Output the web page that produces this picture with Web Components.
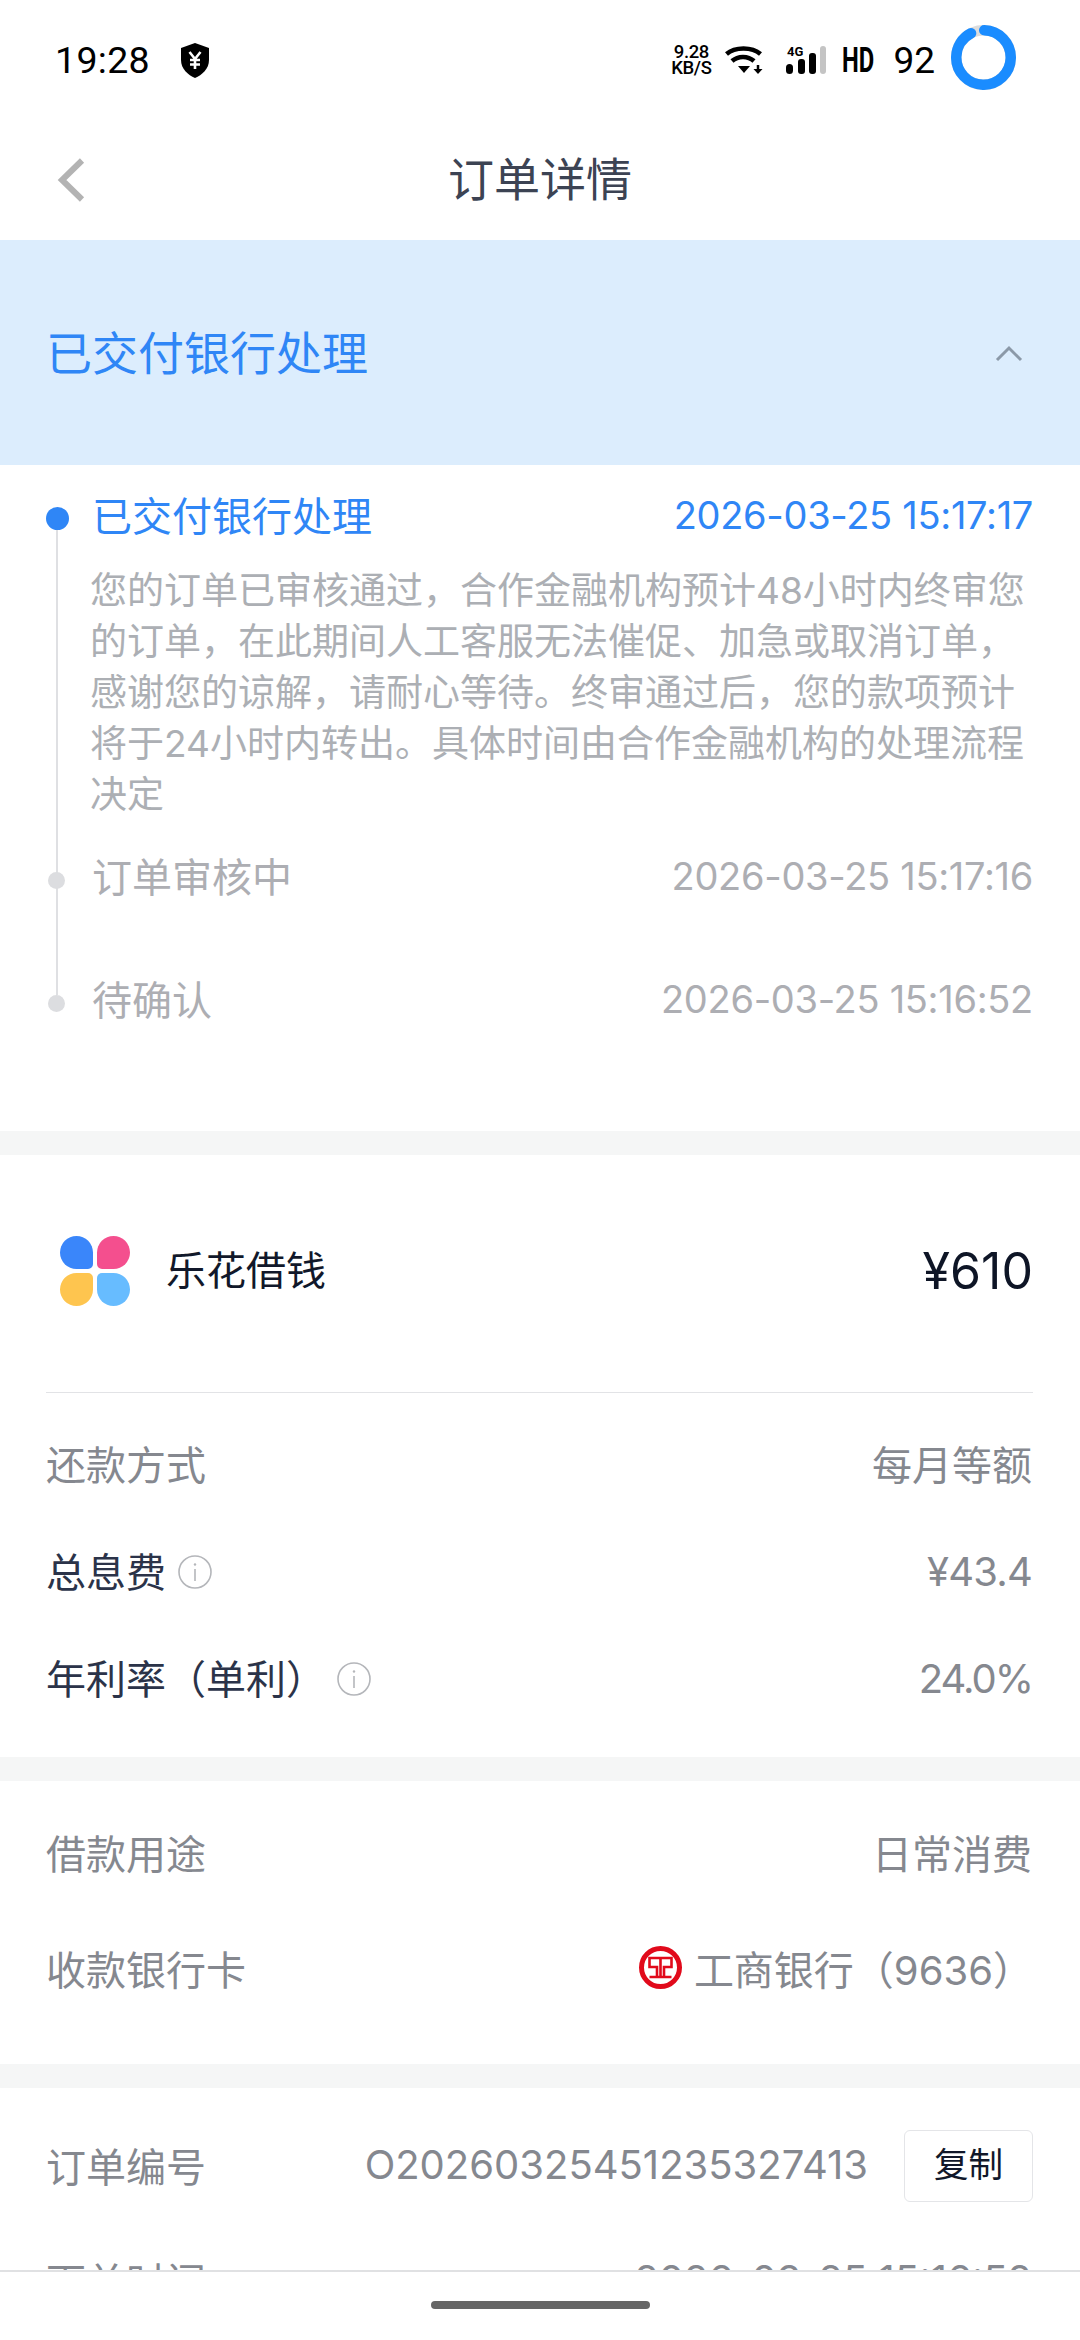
<!DOCTYPE html>
<html lang="zh">
<head>
<meta charset="UTF-8">
<title>订单详情</title>
<style>
  html, body { margin: 0; background: #fff; }
  body { position: relative; width: 1080px; height: 2340px; overflow: hidden; font-family: "Inter", "Noto Sans CJK SC", sans-serif; }
</style>
<script>
  customElements.define('status-bar', class extends HTMLElement {
    constructor() {
      super();
      this.attachShadow({ mode: 'open' }).innerHTML = `
        <style>
          :host { display: flex; align-items: center; height: 120px; padding: 0 64px 0 55px; box-sizing: border-box; color: #000; font-family: "Roboto", sans-serif; }
          .time { font-size: 37.5px; letter-spacing: .3px; }
          .shield { margin-left: 31px; }
          .right { margin-left: auto; display: flex; align-items: center; }
          .speed { width: 42px; font-size: 18.5px; font-weight: 500; line-height: 16px; text-align: center; letter-spacing: -.4px; }
          .hd { display: block; width: 33px; margin-left: 16px; font-size: 35px; font-weight: 700; transform: scaleX(.68); transform-origin: left; white-space: nowrap; }
          .batt { font-size: 37px; margin-left: 18px; }
          .ring { margin: 0 0 5px 16px; }
        </style>
        <span class="time">19:28</span>
        <svg class="shield" width="28" height="35" viewBox="0 0 28 35">
          <path d="M14 0 L28 5 V17 C28 26 21 32 14 35 C7 32 0 26 0 17 V5 Z" fill="#000"/>
          <path d="M8.5 9 L14 16 L19.5 9 M14 16 V26 M9 17 H19 M9 21.5 H19" stroke="#fff" stroke-width="2.6" fill="none"/>
        </svg>
        <div class="right">
          <div class="speed">9.28<br>KB/S</div>
          <svg width="38" height="28" viewBox="0 0 38 28" style="margin-left:13px">
            <path d="M1.5 8 C10 0.5 27 0.5 35.5 8" stroke="#000" stroke-width="4.5" fill="none"/>
            <path d="M7 15 C13 9.5 23 9.5 29 15" stroke="#000" stroke-width="4.5" fill="none"/>
            <path d="M13 20 H25 L19 27 Z" fill="#000"/>
            <path d="M33 19 V23" stroke="#000" stroke-width="2.5"/>
            <path d="M28.5 23 H37.5 L33 28 Z" fill="#000"/>
          </svg>
          <svg width="40" height="36" viewBox="0 -8 40 36" style="margin:-8px 0 0 23px">
            <text x="1" y="10" font-family="Roboto" font-size="13" font-weight="700" fill="#000">4G</text>
            <rect x="0" y="18" width="7" height="10" rx="3.5" fill="#000"/>
            <rect x="12" y="13" width="7" height="15" rx="3" fill="#000"/>
            <rect x="23" y="7" width="7" height="21" rx="3" fill="#000"/>
            <rect x="34" y="0" width="6" height="28" rx="3" fill="#c4c4c4"/>
          </svg>
          <span class="hd">HD</span>
          <span class="batt">92</span>
          <svg class="ring" width="65" height="65" viewBox="0 0 65 65">
            <circle cx="32.5" cy="32.5" r="27.25" fill="none" stroke="#dcdcdc" stroke-width="10.5"/>
            <circle cx="32.5" cy="32.5" r="27.25" fill="none" stroke="#1a8cff" stroke-width="10.5" stroke-linecap="round" pathLength="100" stroke-dasharray="92 8" transform="rotate(-88.5 32.5 32.5)"/>
          </svg>
        </div>`;
    }
  });

  customElements.define('nav-header', class extends HTMLElement {
    constructor() {
      super();
      this.attachShadow({ mode: 'open' }).innerHTML = `
        <style>
          :host { display: flex; align-items: center; justify-content: center; position: relative; height: 120px; padding-bottom: 8px; box-sizing: border-box; font-size: 46px; color: #3c4353; }
          svg { position: absolute; left: 54px; top: 38px; }
        </style>
        <svg width="34" height="44" viewBox="0 0 34 44"><path d="M28 2.5 L8 22 L28 41.5" fill="none" stroke="#b3b3b3" stroke-width="6"/></svg>
        <slot></slot>`;
    }
  });

  customElements.define('status-banner', class extends HTMLElement {
    constructor() {
      super();
      this.attachShadow({ mode: 'open' }).innerHTML = `
        <style>
          :host { display: flex; align-items: center; justify-content: space-between; height: 225px; padding: 0 56px 0 46px; background: #dcedfd; color: #2f86f6; font-size: 46px; box-sizing: border-box; }
          span { margin-bottom: 6px; }
        </style>
        <span><slot></slot></span>
        <svg width="30" height="18" viewBox="0 0 30 18"><path d="M3 16 L15 4 L27 16" fill="none" stroke="#8b99a8" stroke-width="3"/></svg>`;
    }
  });

  customElements.define('time-line', class extends HTMLElement {
    constructor() {
      super();
      this.attachShadow({ mode: 'open' }).innerHTML = `
        <style>
          :host { display: block; position: relative; padding: 14px 47px 98px 46px; }
          .rail { position: absolute; left: 56px; top: 65px; width: 1.5px; height: 465px; background: #dfe0e3; }
        </style>
        <div class="rail"></div>
        <slot></slot>`;
    }
  });

  customElements.define('time-node', class extends HTMLElement {
    constructor() {
      super();
      this.attachShadow({ mode: 'open' }).innerHTML = `
        <style>
          :host { display: block; position: relative; color: #adaeb3; }
          :host([active]) { color: #2f86f6; }
          .row { display: flex; align-items: center; justify-content: space-between; height: 70px; font-size: 40px; }
          .dot { width: 17px; height: 17px; border-radius: 50%; background: #dcdde0; margin: 10px 27px 0 2px; flex: none; }
          :host([active]) .dot { width: 23px; height: 23px; background: #2f86f6; margin: 9px 23px 0 0; }
          .title { display: flex; align-items: center; }
          time { font-size: 38px; letter-spacing: -.3px; padding-top: 2px; }
          ::slotted([slot=desc]) { display: block; margin: 0 -8px 0 44px; font-size: 37px; line-height: 51px; color: #acafb4; padding-top: 16px; }
        </style>
        <div class="row">
          <div class="title"><span class="dot"></span><slot></slot></div>
          <time><slot name="time"></slot></time>
        </div>
        <slot name="desc"></slot>`;
    }
  });

  customElements.define('section-gap', class extends HTMLElement {
    constructor() {
      super();
      this.attachShadow({ mode: 'open' }).innerHTML = `<style>:host { display: block; height: 24px; background: #f5f6f6; }</style>`;
    }
  });

  customElements.define('product-row', class extends HTMLElement {
    constructor() {
      super();
      this.attachShadow({ mode: 'open' }).innerHTML = `
        <style>
          :host { display: flex; align-items: center; height: 238px; margin: 0 47px 0 46px; padding-bottom: 5px; border-bottom: 1.5px solid #e2e3e6; box-sizing: border-box; font-size: 40px; color: #11182a; }
          svg { margin: 0 36px 0 14px; }
          .name { margin-bottom: 7px; }
          .amount { margin-left: auto; font-size: 50px; color: #0e1526; }
        </style>
        <svg width="70" height="70" viewBox="0 0 70 70">
          <path d="M0 16.5 A16.5 16.5 0 0 1 33 16.5 V28 A5 5 0 0 1 28 33 H16.5 A16.5 16.5 0 0 1 0 16.5 Z" fill="#3a86fa"/>
          <path d="M37 16.5 A16.5 16.5 0 1 1 53.5 33 H42 A5 5 0 0 1 37 28 Z" fill="#f44f8e"/>
          <path d="M0 53.5 A16.5 16.5 0 0 1 16.5 37 H28 A5 5 0 0 1 33 42 V53.5 A16.5 16.5 0 0 1 0 53.5 Z" fill="#fec54f"/>
          <path d="M37 42 A5 5 0 0 1 42 37 H53.5 A16.5 16.5 0 1 1 37 53.5 Z" fill="#67bcff"/>
        </svg>
        <span class="name"><slot></slot></span>
        <span class="amount"><slot name="amount"></slot></span>`;
    }
  });

  customElements.define('info-group', class extends HTMLElement {
    constructor() {
      super();
      this.attachShadow({ mode: 'open' }).innerHTML = `
        <style>:host { display: block; }</style>
        <slot></slot>`;
    }
  });

  customElements.define('info-row', class extends HTMLElement {
    constructor() {
      super();
      this.attachShadow({ mode: 'open' }).innerHTML = `
        <style>
          :host { display: flex; align-items: center; justify-content: space-between; padding: 0 48px 0 46px; box-sizing: border-box; font-size: 40px; color: #85888f; height: var(--h, 107px); }
          :host([dark]) .label { color: #2b3349; }
          .label { display: flex; align-items: center; }
          .value { display: flex; align-items: center; }
        </style>
        <span class="label"><slot></slot></span>
        <span class="value"><slot name="value"></slot></span>`;
    }
  });

  customElements.define('info-icon', class extends HTMLElement {
    constructor() {
      super();
      this.attachShadow({ mode: 'open' }).innerHTML = `
        <style>:host { display: inline-flex; margin: 5px 0 0 var(--ml, 12px); }</style>
        <svg width="34" height="34" viewBox="0 0 34 34">
          <circle cx="17" cy="17" r="16" fill="none" stroke="#b4b6ba" stroke-width="1.6"/>
          <path d="M17 14 V26" stroke="#b4b6ba" stroke-width="1.6"/>
          <circle cx="17" cy="9.5" r="1.2" fill="#b4b6ba"/>
        </svg>`;
    }
  });

  customElements.define('icbc-logo', class extends HTMLElement {
    constructor() {
      super();
      this.attachShadow({ mode: 'open' }).innerHTML = `
        <style>:host { display: inline-flex; margin-right: 12px; transform: translateY(-1px); }</style>
        <svg width="43" height="43" viewBox="0 0 43 43">
          <circle cx="21.5" cy="21.5" r="19" fill="none" stroke="#e10a1b" stroke-width="5"/>
          <path d="M18 12 H10.5 V21 H18 V31 H10.5 M25 12 H32.5 V21 H25 V31 H32.5 M18 12 H25 M18 31 H25 M21.5 12 V31" fill="none" stroke="#e10a1b" stroke-width="2.6"/>
        </svg>`;
    }
  });

  customElements.define('copy-button', class extends HTMLElement {
    constructor() {
      super();
      this.attachShadow({ mode: 'open' }).innerHTML = `
        <style>:host { display: flex; align-items: center; justify-content: center; width: 129px; height: 72px; margin: 2px 0 0 36px; border: 1.5px solid #e4e5e8; border-radius: 6px; box-sizing: border-box; color: #11182a; font-size: 34.56px; padding-bottom: 7px; }</style>
        <slot></slot>`;
    }
  });

  customElements.define('bottom-bar', class extends HTMLElement {
    constructor() {
      super();
      this.attachShadow({ mode: 'open' }).innerHTML = `
        <style>
          :host { display: flex; justify-content: center; position: absolute; left: 0; top: 2270px; width: 1080px; height: 70px; background: #fff; border-top: 2px solid #e0e1e3; box-sizing: border-box; }
          i { display: block; width: 219px; height: 8px; margin-top: 29px; border-radius: 4px; background: #666; }
        </style>
        <i></i>`;
    }
  });
</script>
</head>
<body>
  <status-bar></status-bar>
  <nav-header>订单详情</nav-header>
  <status-banner>已交付银行处理</status-banner>
  <time-line>
    <time-node active>已交付银行处理<span slot="time">2026-03-25 15:17:17</span><span slot="desc">您的订单已审核通过，合作金融机构预计48小时内终审您的订单，在此期间人工客服无法催促、加急或取消订单，感谢您的谅解，请耐心等待。终审通过后，您的款项预计将于24小时内转出。具体时间由合作金融机构的处理流程决定</span></time-node>
    <time-node style="margin-top:20px">订单审核中<span slot="time">2026-03-25 15:17:16</span></time-node>
    <time-node style="margin-top:53px">待确认<span slot="time">2026-03-25 15:16:52</span></time-node>
  </time-line>
  <section-gap></section-gap>
  <product-row>乐花借钱<span slot="amount">¥610</span></product-row>
  <info-group style="padding:16px 0 27px">
    <info-row>还款方式<span slot="value">每月等额</span></info-row>
    <info-row dark>总息费<info-icon></info-icon><span slot="value" style="letter-spacing:-.8px;padding-top:3px">¥43.4</span></info-row>
    <info-row dark>年利率（单利）<info-icon style="--ml:11px"></info-icon><span slot="value" style="letter-spacing:-2px;padding-top:3px">24.0%</span></info-row>
  </info-group>
  <section-gap></section-gap>
  <info-group style="padding:13px 0 38px">
    <info-row style="--h:116px">借款用途<span slot="value">日常消费</span></info-row>
    <info-row style="--h:116px">收款银行卡<span slot="value" style="display:flex;align-items:center;margin-right:-1px"><icbc-logo></icbc-logo>工商银行（9636）</span></info-row>
  </info-group>
  <section-gap></section-gap>
  <info-group style="padding:19px 0 0">
    <info-row style="--h:115px">订单编号<span slot="value" style="display:flex;align-items:center;margin-right:-1px">O20260325451235327413<copy-button>复制</copy-button></span></info-row>
    <info-row style="--h:115px">下单时间<span slot="value">2026-03-25 15:16:52</span></info-row>
  </info-group>
  <bottom-bar></bottom-bar>
</body>
</html>
